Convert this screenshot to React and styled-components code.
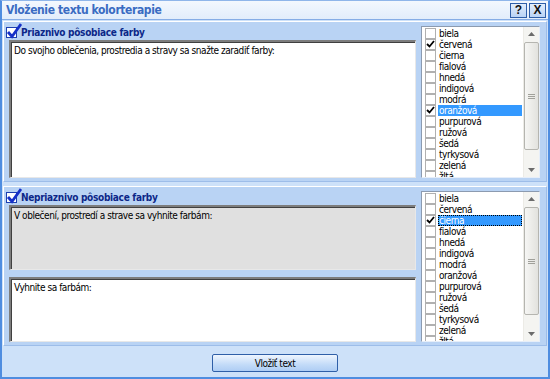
import React from "react"
import styled, { createGlobalStyle } from "styled-components"

const FONT = `"DejaVu Sans Condensed", "Liberation Sans", sans-serif`

const GlobalStyle = createGlobalStyle`
  html, body { margin: 0; padding: 0; }
  body { font-family: ${FONT}; }
  * { box-sizing: border-box; }
`

const Window = styled.div`
  width: 550px;
  height: 379px;
  display: flex;
  flex-direction: column;
  background: #cde1f9;
  border: 2px solid #4f8de0;
  border-top: 1px solid #8fb6ea;
  font-family: ${FONT};
  font-size: 10px;
  letter-spacing: -0.45px;
  overflow: hidden;
`

const TitleBar = styled.div`
  height: 19px;
  flex: none;
  display: flex;
  align-items: center;
  padding: 0 2px 0 4px;
  background: linear-gradient(#f3f8fe, #e2edfb);
  border-bottom: 1px solid #86ade6;
`

const Title = styled.div`
  flex: 1;
  font-size: 12px;
  font-weight: bold;
  letter-spacing: -0.4px;
  color: #3a6cc2;
`

const TitleButton = styled.div`
  width: 17px;
  height: 15px;
  margin-left: 2px;
  display: flex;
  align-items: center;
  justify-content: center;
  border: 1px solid #2f5fa8;
  background: linear-gradient(#e3eefc, #b9d3f5);
  font-family: "Liberation Sans", sans-serif;
  font-size: 12px;
  font-weight: bold;
  letter-spacing: 0;
  color: #111;
`

const Body = styled.div`
  flex: 1;
  display: flex;
  flex-direction: column;
  gap: 4px;
  padding: 1px 1px 0 1px;
`

const Group = styled.div`
  display: grid;
  grid-template-columns: 1fr 119px;
  column-gap: 5px;
  height: ${p => p.$h}px;
  padding: 4px 6px 3px 5px;
  background: #b9d3f4;
  border: 1px solid #ffffff;
  border-right-color: #9dbde9;
  border-bottom-color: #9dbde9;
`

const LeftCol = styled.div`
  display: flex;
  flex-direction: column;
  gap: 7px;
  min-height: 0;
`

const Header = styled.div`
  height: 13px;
  display: flex;
  align-items: center;
  gap: 4px;
  margin: 0 0 -6px -3px;
  font-weight: bold;
  font-size: 10px;
  letter-spacing: -0.3px;
  color: #0c2788;
`

const HeaderBox = styled.span`
  position: relative;
  width: 11px;
  height: 11px;
  background: #fff;
  border: 1px solid #1c3fb0;
  flex: none;
`

const TextBox = styled.div`
  flex: 1;
  min-height: 0;
  padding: 3px 3px;
  background: ${p => (p.$disabled ? "#e0e0e0" : "#ffffff")};
  border-top: 2px solid #7d7d7d;
  border-left: 2px solid #7d7d7d;
  border-right: 1px solid #e8e8e8;
  border-bottom: 1px solid #e8e8e8;
  box-shadow: inset 1px 1px 0 #404040;
  color: #000;
  line-height: 12px;
`

const ListBox = styled.div`
  display: flex;
  height: 100%;
  background: #fff;
  border: 1px solid #8c9bb0;
  border-right-color: #e6eef9;
  border-bottom-color: #e6eef9;
  overflow: hidden;
`

const Items = styled.div`
  flex: 1;
  padding: 1px 1px 0 3px;
  overflow: hidden;
`

const Item = styled.div`
  height: 11px;
  display: flex;
  align-items: center;
  gap: 2px;
  line-height: 11px;
  white-space: nowrap;
`

const Box = styled.span`
  width: 11px;
  height: 11px;
  flex: none;
  display: flex;
  align-items: center;
  justify-content: center;
  border: 1px solid #b0b0b0;
  background: #fff;
`

const Label = styled.span`
  flex: 1;
  height: 11px;
  padding-left: 1px;
  background: ${p => (p.$sel ? "#3399ff" : "transparent")};
  color: ${p => (p.$sel ? "#fff" : "#000")};
  outline: ${p => (p.$focus ? "1px dotted #000" : "none")};
  outline-offset: -1px;
`

const ScrollBar = styled.div`
  width: 16px;
  flex: none;
  display: flex;
  flex-direction: column;
  align-items: center;
  background: #f4f4f1;
  border-left: 1px solid #ecebe6;
`

const Arrow = styled.div`
  height: 14px;
  flex: none;
  display: flex;
  align-items: center;
  justify-content: center;
`

const Track = styled.div`
  flex: 1;
  width: 100%;
  padding: 1px 0 11px;
  display: flex;
`

const Thumb = styled.div`
  width: 15px;
  height: 108px;
  border: 1px solid #b5b5b0;
  border-radius: 2px;
  background: linear-gradient(90deg, #f6f6f4, #e2e2de);
  display: flex;
  align-items: center;
  justify-content: center;
`

const Footer = styled.div`
  flex: 1;
  display: flex;
  justify-content: center;
  padding-top: 4px;
`

const Button = styled.button`
  width: 126px;
  height: 18px;
  padding: 0;
  font-family: ${FONT};
  font-size: 10px;
  letter-spacing: -0.45px;
  color: #000;
  border: 1px solid #2f5fa8;
  border-radius: 2px;
  background: linear-gradient(#eef5fe, #c3dbf8 60%, #aecdf4);
`

const colors = ["biela", "červená", "čierna", "fialová", "hnedá", "indigová", "modrá", "oranžová", "purpurová", "ružová", "šedá", "tyrkysová", "zelená", "žltá"]

const SmallCheck = () => (
  <svg width="9" height="9" viewBox="0 0 9 9">
    <path d="M1 4 L3.5 6.5 L8 1" stroke="#000" strokeWidth="1.8" fill="none" />
  </svg>
)

const BigCheck = () => (
  <svg width="16" height="16" viewBox="0 0 16 16" style={{ position: "absolute", left: -1, top: -5 }}>
    <path d="M2 9 L6 13.5 L15 1" stroke="#1530c8" strokeWidth="2.8" fill="none" />
  </svg>
)

const Grip = () => (
  <svg width="7" height="7" viewBox="0 0 7 7">
    <path d="M0 1.5h7M0 3.5h7M0 5.5h7" stroke="#a0a09a" strokeWidth="1" />
  </svg>
)

const ColorList = ({ checked, selected, focus }) => (
  <ListBox>
    <Items>
      {colors.map(c => (
        <Item key={c}>
          <Box>{checked.includes(c) && <SmallCheck />}</Box>
          <Label $sel={c === selected} $focus={focus && c === selected}>{c}</Label>
        </Item>
      ))}
    </Items>
    <ScrollBar>
      <Arrow>
        <svg width="7" height="4"><path d="M0 4 L3.5 0 L7 4Z" fill="#6b6b6b" /></svg>
      </Arrow>
      <Track>
        <Thumb><Grip /></Thumb>
      </Track>
      <Arrow>
        <svg width="7" height="4"><path d="M0 0 L3.5 4 L7 0Z" fill="#6b6b6b" /></svg>
      </Arrow>
    </ScrollBar>
  </ListBox>
)

const App = () => (
  <>
    <GlobalStyle />
    <Window>
      <TitleBar>
        <Title>Vloženie textu kolorterapie</Title>
        <TitleButton>?</TitleButton>
        <TitleButton>X</TitleButton>
      </TitleBar>
      <Body>
        <Group $h={161}>
          <LeftCol>
            <Header>
              <HeaderBox><BigCheck /></HeaderBox>
              Priaznivo pôsobiace farby
            </Header>
            <TextBox>Do svojho oblečenia, prostredia a stravy sa snažte zaradiť farby:</TextBox>
          </LeftCol>
          <ColorList checked={["červená", "oranžová"]} selected="oranžová" />
        </Group>
        <Group $h={160}>
          <LeftCol>
            <Header>
              <HeaderBox><BigCheck /></HeaderBox>
              Nepriaznivo pôsobiace farby
            </Header>
            <TextBox $disabled>V oblečení, prostredí a strave sa vyhnite farbám:</TextBox>
            <TextBox>Vyhnite sa farbám:</TextBox>
          </LeftCol>
          <ColorList checked={["čierna"]} selected="čierna" focus />
        </Group>
        <Footer>
          <Button>Vložiť text</Button>
        </Footer>
      </Body>
    </Window>
  </>
)

export default App
